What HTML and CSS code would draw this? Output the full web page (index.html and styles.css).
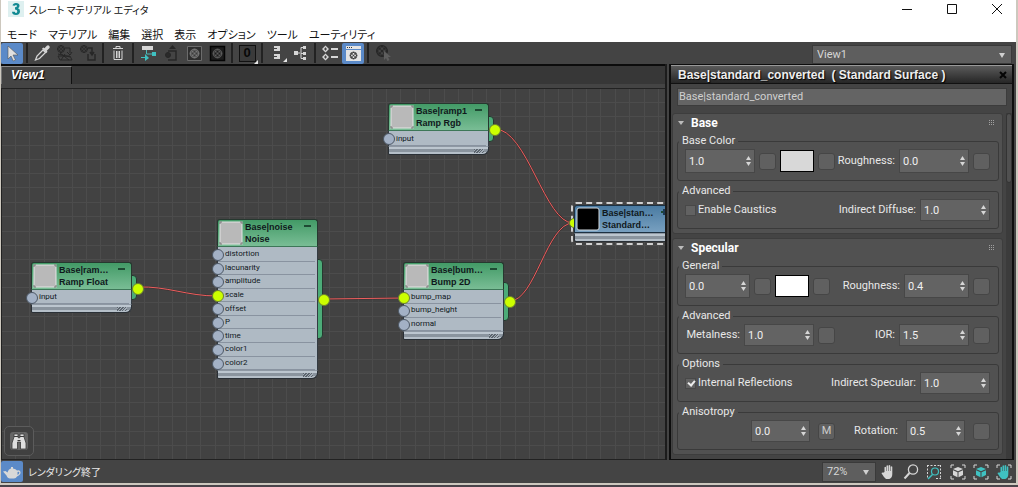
FILE: index.html
```html
<!DOCTYPE html>
<html lang="ja">
<head>
<meta charset="utf-8">
<title>スレート マテリアル エディタ</title>
<link rel="stylesheet" href="styles.css">
</head>
<body>
<svg class="defs" width="0" height="0" aria-hidden="true">
  <defs>
    <symbol id="spin" viewBox="0 0 5 10"><path d="M0 4L2.5 0L5 4zM0 6L2.5 10L5 6z" fill="#d6d6d6"/></symbol>
    <symbol id="ball" viewBox="0 0 10 10"><circle cx="5" cy="5" r="4.400" fill="none" stroke="currentColor"/><path d="M4 0h2v2H4zM2 2h2v2H2zM6 2h2v2H6zM0 4h2v2H0zM4 4h2v2H4zM8 4h2v2H8zM2 6h2v2H2zM6 6h2v2H6zM4 8h2v2H4z" fill="currentColor"/></symbol>
    <symbol id="thumb" viewBox="0 0 24 24"><rect x="1" y="1" width="22" height="22" fill="#b9b9b9" stroke="#e4e4e4"/><path d="M1 3V1h2M21 1h2v2M23 21v2h-2M3 23H1v-2" fill="none" stroke="#777"/></symbol>
    <symbol id="grip" viewBox="0 0 6 6"><path d="M0 0h1v1H0zM2 0h1v1H2zM4 0h1v1H4zM0 2h1v1H0zM2 2h1v1H2zM4 2h1v1H4zM0 4h1v1H0zM2 4h1v1H2zM4 4h1v1H4z" fill="#a0a0a0"/></symbol>
    <symbol id="cube" viewBox="0 0 16 16"><path d="M1 4V1h3M12 1h3v3M15 12v3h-3M4 15H1v-3" fill="none" stroke="#d6d6d6"/><path d="M8 3l5 2-5 2.300L3 5zM3 6.200l4.500 2v5L3 11zM13 6.200l-4.500 2v5L13 11z" fill="currentColor"/></symbol>
    <symbol id="hand" viewBox="0 0 16 16"><path d="M4.500 8V3.200q.8-1 1.500 0V7h.5V1.700q.8-1 1.600 0V7h.5V1.500q.8-1 1.600 0V7h.5V2.800q.8-1 1.600 0V10q0 4-3 5H6Q4 13.500 1.500 9.200q.6-1.200 1.600-.4z" fill="currentColor"/></symbol>
  </defs>
</svg>
<div class="window">
  <header class="caption">
    <div class="titlebar">
      <svg class="app-icon" viewBox="0 0 16 16" aria-hidden="true"><rect width="16" height="16" fill="#def0f0"/><path d="M4.500 4.500Q5 2 8 2q3.500 0 3.500 2.800Q11.500 6.500 10 7.300q2 .7 2 3Q12 14 8 14q-3.800 0-4-3.200h2.800q.2 1.200 1.300 1.200 1.200 0 1.200-1.700Q9.300 8.500 7 8.500V6.300q1.900 0 1.900-1.200Q8.900 4 8 4q-.8 0-1 .8z" fill="#128a93"/></svg>
      <h1>スレート マテリアル エディタ</h1>
      <div class="window-buttons">
        <button aria-label="最小化"><svg viewBox="0 0 10 10"><path d="M0 5.500h10"/></svg></button>
        <button aria-label="最大化"><svg viewBox="0 0 10 10"><path d="M.5.500h9v9h-9z"/></svg></button>
        <button aria-label="閉じる"><svg viewBox="0 0 10 10"><path d="M0 0l10 10M10 0L0 10"/></svg></button>
      </div>
    </div>
    <nav class="menu">
      <button>モード</button><button>マテリアル</button><button>編集</button><button>選択</button><button>表示</button><button>オプション</button><button>ツール</button><button>ユーティリティ</button>
    </nav>
  </header>

  <div class="toolbar">
    <button class="tool on" aria-label="選択ツール"><svg viewBox="0 0 20 20"><path d="M6 3l10 9h-5l2.500 5-2.200 1-2.300-5L6 16z" fill="#e0e0e0" stroke="#555" stroke-width=".6"/></svg></button>
    <i class="sep"></i>
    <button class="tool" aria-label="スポイト"><svg viewBox="0 0 20 20"><path d="M3.500 17l1.500-4 6-6 2.500 2.500-6 6z" fill="none" stroke="#d6d6d6" stroke-width="1.300"/><path d="M10 5.500l1.500-1 1 .8 2.300-2.600q1.500-1 2.500.3t0 2.300l-2.500 2.500.7 1-1 1.200z" fill="#d6d6d6"/></svg></button>
    <button class="tool off" aria-label="シーンに適用"><svg viewBox="0 0 20 20"><use href="#ball" x="2" y="2" width="8" height="8"/><path d="M10 5h5v5m-3-1l3 3 2-3M3 13h12l2 4H5zM5 10l9 7M10 11l-4 6M3 11l12 3" fill="none" stroke="currentColor"/></svg></button>
    <button class="tool off" aria-label="マテリアルを割り当て"><svg viewBox="0 0 20 20"><use href="#ball" x="2" y="2" width="8" height="8"/><path d="M10 5h4v6m-2-2l2 3 2-3" fill="none" stroke="currentColor" stroke-width="1.500"/><path d="M10 11v6h7v-6" fill="none" stroke="currentColor" stroke-width="1.500"/></svg></button>
    <i class="sep"></i>
    <button class="tool" aria-label="削除"><svg viewBox="0 0 20 20"><path d="M5 5.500h10M8 5V3.500h4V5M6 7.500v9h8v-9M8.500 8v7M10 8v7M11.500 8v7" fill="none" stroke="#d6d6d6"/></svg></button>
    <i class="sep"></i>
    <button class="tool" aria-label="子を移動"><svg viewBox="0 0 20 20"><path d="M4 3h11v4H4z" fill="#d6d6d6"/><path d="M8.500 7v4H14" fill="none" stroke="#4ab8b8"/><path d="M14 9h4v4h-4zM3 14h4v-3l4 4-4 3v-3H3z" fill="#3fc1c1"/></svg></button>
    <button class="tool off" aria-label="未使用を隠す"><svg viewBox="0 0 20 20"><path d="M7 8h8v9H7" fill="none" stroke="currentColor" stroke-width="1.500"/><path d="M8 6l3.500-4L15 6z" fill="currentColor"/><circle cx="7" cy="12" r="2.500" fill="#2a2a2a" stroke="currentColor"/></svg></button>
    <button class="tool" aria-label="ビューポートに表示"><svg viewBox="0 0 20 20"><path d="M3.500 3.500h14v14h-14z" fill="#2e2e2e" stroke="#6c6c6c"/><circle cx="10.500" cy="10.500" r="5" fill="#3c3c3c"/><g color="#777"><use href="#ball" x="5.500" y="5.500" width="10" height="10"/></g></svg></button>
    <button class="tool" aria-label="背景を表示"><svg viewBox="0 0 20 20"><path d="M3.500 3.500h14v14h-14z" fill="#1c1c1c" stroke="#050505" stroke-width="1.500"/><g color="#5c5c5c"><use href="#ball" x="5.500" y="5.500" width="10" height="10"/></g></svg></button>
    <i class="sep"></i>
    <button class="tool channel" aria-label="マテリアル ID チャネル"><span>0</span></button>
    <i class="sep"></i>
    <button class="tool" aria-label="すべてレイアウト"><svg viewBox="0 0 20 20"><path d="M7 3h6v5H7zM7 11h6v5H7z" fill="#d6d6d6"/><path d="M7 5.500h3M7 13.500h3" stroke="#444"/><path d="M20 15v4h-4z" fill="#e8e8e8"/></svg></button>
    <button class="tool" aria-label="子をレイアウト"><svg viewBox="0 0 20 20"><path d="M4 8h4v4H4zM13 3h3v3h-3zM13 9h3v3h-3zM13 14h3v3h-3z" fill="#d6d6d6"/><path d="M8 10h2M13 4.500h-2v11h2M11 10.500h2" fill="none" stroke="#d6d6d6"/></svg></button>
    <i class="sep"></i>
    <button class="tool" aria-label="ブラウザ"><svg viewBox="0 0 20 20"><path d="M5.500 2.500L9 6 5.500 9.500 2 6zM5.500 10.500L9 14l-3.500 3.500L2 14z" fill="#d6d6d6"/><path d="M4 6h3M5.500 4.500v3M4 14h3M5.500 12.500v3" stroke="#444"/><path d="M11 6h7M11 14h7" stroke="#d6d6d6" stroke-width="2"/></svg></button>
    <button class="tool on" aria-label="パラメータ エディタ"><svg viewBox="0 0 20 20"><path d="M3 3h15v3H3zM3 7h15v11H3z" fill="#e4e4e4"/><path d="M4 4.500h1M6 4.500h1M8 4.500h1" stroke="#333"/><g color="#3a3a3a"><use href="#ball" x="6.500" y="8.500" width="8" height="8"/></g></svg></button>
    <i class="sep"></i>
    <button class="tool off" aria-label="マテリアルから選択"><svg viewBox="0 0 20 20"><use href="#ball" x="3" y="2" width="12" height="12"/><path d="M11 8l7 6h-3l1.500 3-2 1-1.500-3-2 2z" fill="#5e5e5e"/></svg></button>
    <div class="pick view-pick"><select aria-label="ビュー"><option>View1</option></select></div>
  </div>

  <main class="work">
    <section class="view">
      <div class="tabs"><button class="tab">View1</button></div>
      <div class="canvas">
        <svg class="wires" aria-hidden="true">
          <defs><pattern id="grid" x="-1" y="-1" width="100" height="100" patternUnits="userSpaceOnUse"><path d="M14.500 0v100M28.500 0v100M43.500 0v100M57.500 0v100M71.500 0v100M85.500 0v100M99.500 0v100M0 14.500h100M0 28.500h100M0 43.500h100M0 57.500h100M0 71.500h100M0 85.500h100M0 99.500h100" stroke="#4c4c4c"/></pattern></defs>
          <rect width="100%" height="100%" fill="url(#grid)"/>
          <path class="wire-shade" d="M136 198C165 197 185 207 215 207M322 210L401 209M493 40C525 40 543 134 571 134M508 212C533 212 545 134 571 134"/>
          <path class="wire" d="M136 198C165 197 185 207 215 207M322 210L401 209M493 40C525 40 543 134 571 134M508 212C533 212 545 134 571 134"/>
        </svg>

        <article class="node ramp-rgb">
          <i class="out"></i>
          <header><svg viewBox="0 0 24 24"><use href="#thumb"/></svg><h2>Base|ramp1<br>Ramp Rgb</h2><b class="fold"></b></header>
          <ul><li>input</li></ul><footer></footer>
        </article>
        <article class="node noise">
          <i class="out"></i>
          <header><svg viewBox="0 0 24 24"><use href="#thumb"/></svg><h2>Base|noise<br>Noise</h2><b class="fold"></b></header>
          <ul><li>distortion</li><li>lacunarity</li><li>amplitude</li><li class="linked">scale</li><li>offset</li><li>P</li><li>time</li><li>color1</li><li>color2</li></ul><footer></footer>
        </article>
        <article class="node ramp-float">
          <i class="out"></i>
          <header><svg viewBox="0 0 24 24"><use href="#thumb"/></svg><h2>Base|ram…<br>Ramp Float</h2><b class="fold"></b></header>
          <ul><li>input</li></ul><footer></footer>
        </article>
        <article class="node bump">
          <i class="out"></i>
          <header><svg viewBox="0 0 24 24"><use href="#thumb"/></svg><h2>Base|bum…<br>Bump 2D</h2><b class="fold"></b></header>
          <ul><li class="linked">bump_map</li><li>bump_height</li><li>normal</li></ul><footer></footer>
        </article>
        <article class="node standard">
          <i class="in"></i>
          <header><svg viewBox="0 0 24 24"><rect x="1" y="1" width="22" height="22" rx="2" stroke="#d0d8de"/></svg><h2>Base|stan…<br>Standard…</h2><b class="fold plus"></b></header>
          <footer></footer>
        </article>

        <button class="find" aria-label="検索"><svg viewBox="0 0 20 20"><rect x="1" y="1" width="18" height="18" rx="3" fill="#666"/><path d="M5 3h4v3l.5 1h1l.5-1V3h4v3l2 6v6h-5.500v-7h-3v7H3v-6l2-6z" fill="#e0e0e0" stroke="#3a3a3a" stroke-width=".8"/><path d="M5 5.500h4M11 5.500h4M8.500 9.500h3" stroke="#3a3a3a"/></svg></button>
      </div>
    </section>

    <aside class="params">
      <header class="params-head"><h2>Base|standard_converted&nbsp; ( Standard Surface )</h2><button aria-label="閉じる"><svg viewBox="0 0 8 8"><path d="M1 1l6 6M7 1L1 7" stroke="#050505" stroke-width="2"/></svg></button></header>
      <input class="name" aria-label="名前" value="Base|standard_converted">
      <div class="rollouts">
        <div class="list">
          <section class="rollout">
            <h3><button><i class="tri"></i>Base</button><svg viewBox="0 0 6 6"><use href="#grip"/></svg></h3>
            <fieldset class="tall"><legend>Base Color</legend>
              <div class="left"><span class="spin"><input aria-label="Base Color" value="1.0"><svg><use href="#spin"/></svg></span><button class="map" aria-label="マップ"></button><button class="swatch grey" aria-label="カラー"></button><button class="map" aria-label="マップ"></button></div>
              <div class="right"><label for="br">Roughness:</label><span class="spin"><input id="br" value="0.0"><svg><use href="#spin"/></svg></span><button class="map" aria-label="マップ"></button></div>
            </fieldset>
            <fieldset><legend>Advanced</legend>
              <label class="check"><input type="checkbox">Enable Caustics</label>
              <div class="right"><label for="bd">Indirect Diffuse:</label><span class="spin"><input id="bd" value="1.0"><svg><use href="#spin"/></svg></span></div>
            </fieldset>
          </section>
          <section class="rollout">
            <h3><button><i class="tri"></i>Specular</button><svg viewBox="0 0 6 6"><use href="#grip"/></svg></h3>
            <fieldset class="tall"><legend>General</legend>
              <div class="left"><span class="spin medium"><input aria-label="Specular" value="0.0"><svg><use href="#spin"/></svg></span><button class="map" aria-label="マップ"></button><button class="swatch" aria-label="カラー"></button><button class="map" aria-label="マップ"></button></div>
              <div class="right"><label for="sr">Roughness:</label><span class="spin medium"><input id="sr" value="0.4"><svg><use href="#spin"/></svg></span><button class="map" aria-label="マップ"></button></div>
            </fieldset>
            <fieldset><legend>Advanced</legend>
              <div class="left end"><label for="sm">Metalness:</label><span class="spin"><input id="sm" value="1.0"><svg><use href="#spin"/></svg></span><button class="map" aria-label="マップ"></button></div>
              <div class="right"><label for="si">IOR:</label><span class="spin"><input id="si" value="1.5"><svg><use href="#spin"/></svg></span><button class="map" aria-label="マップ"></button></div>
            </fieldset>
            <fieldset><legend>Options</legend>
              <label class="check"><input type="checkbox" checked>Internal Reflections</label>
              <div class="right"><label for="ss">Indirect Specular:</label><span class="spin"><input id="ss" value="1.0"><svg><use href="#spin"/></svg></span></div>
            </fieldset>
            <fieldset class="wide"><legend>Anisotropy</legend>
              <div class="left end"><span class="spin small"><input aria-label="Anisotropy" value="0.0"><svg><use href="#spin"/></svg></span><button class="map">M</button></div>
              <div class="right"><label for="sa">Rotation:</label><span class="spin small"><input id="sa" value="0.5"><svg><use href="#spin"/></svg></span><button class="map" aria-label="マップ"></button></div>
            </fieldset>
          </section>
          <section class="rollout"></section>
        </div>
        <div class="scroll"><i></i></div>
      </div>
    </aside>
  </main>

  <footer class="status">
    <button class="tool on" aria-label="レンダリング"><svg viewBox="0 0 20 20"><path d="M9 5h2v1.500q3 .3 4 2 3-1 3.500 1.500T15 14.500q-1 2-3 2H8q-2.500 0-3.500-3L1 9.500 3.500 9l2 1.500Q6.500 7 9 6.500z" fill="#d8d8d8"/><path d="M15.500 10q2-.8 1.800.7T15.500 13z" fill="#5b8ac8"/></svg></button>
    <p>レンダリング終了</p>
    <div class="pick zoom-pick"><select aria-label="ズーム"><option>72%</option></select></div>
    <button class="tool" aria-label="パン"><svg viewBox="0 0 20 20"><g color="#d6d6d6"><use href="#hand" x="2" y="2" width="16" height="16"/></g></svg></button>
    <button class="tool" aria-label="ズーム"><svg viewBox="0 0 20 20"><circle cx="12" cy="7.500" r="4.600" fill="none" stroke="#d6d6d6" stroke-width="1.300"/><path d="M8.500 11L3.500 16.500" stroke="#d6d6d6" stroke-width="2"/></svg></button>
    <button class="tool" aria-label="領域ズーム"><svg viewBox="0 0 20 20"><path d="M3.500 3v14M3 3.500h14M16.500 3v14M12 16.500h5" fill="none" stroke="#d6d6d6" stroke-dasharray="2 1.500"/><circle cx="11" cy="9.500" r="3.500" fill="#444" stroke="#3fc1c1" stroke-width="1.200"/><path d="M8.500 12.500L4 17" stroke="#3fc1c1" stroke-width="1.500"/></svg></button>
    <button class="tool" aria-label="全体表示"><svg viewBox="0 0 20 20"><g color="#d6d6d6"><use href="#cube" x="3" y="2" width="16" height="16"/></g></svg></button>
    <button class="tool" aria-label="選択を全体表示"><svg viewBox="0 0 20 20"><g color="#3fc1c1"><use href="#cube" x="3" y="2" width="16" height="16"/></g></svg></button>
    <button class="tool" aria-label="選択にパン"><svg viewBox="0 0 20 20"><path d="M4 6V3h3M15 3h3v3M18 14v3h-3M7 17H4v-3" fill="none" stroke="#d6d6d6"/><g color="#3fc1c1"><use href="#hand" x="3" y="2" width="16" height="16"/></g></svg></button>
  </footer>
</div>
</body>
</html>
```
FILE: styles.css
```css
* { box-sizing: border-box; }
body {
  margin: 0;
  background: #4a444a;
  color: #e8e8e8;
  font: 11px/14px Roboto, "Noto Sans", "Noto Sans CJK JP", sans-serif;
}
button, input, select { font: inherit; color: inherit; margin: 0; }
button { border: 0; padding: 0; background: none; }
h1, h2, h3, p, ul { margin: 0; padding: 0; font-size: inherit; font-weight: normal; list-style: none; }
i { display: block; }
svg { display: block; flex: none; }
.defs { position: absolute; }

.window {
  display: flex;
  flex-direction: column;
  height: calc(100vh - 2px);
  border: solid #cdc8be;
  border-width: 0 2px 2px 1px;
  background: #444;
}

/* caption and menus */
.caption {
  display: flex;
  flex-direction: column;
  gap: 9px;
  background: #fff;
  color: #111;
  font: 11px/15px "Noto Sans CJK JP", sans-serif;
  font-feature-settings: "palt";
}
.titlebar { display: flex; align-items: center; height: 18px; padding-left: 7px; }
.app-icon { width: 16px; height: 16px; }
.titlebar h1 { padding-left: 5px; font-size: 10px; }
.window-buttons { display: flex; gap: 9px; margin-left: auto; padding-right: 1px; }
.window-buttons button { display: grid; place-items: center; width: 36px; height: 18px; }
.window-buttons svg { width: 10px; height: 10px; fill: none; stroke: #111; }
.menu { display: flex; gap: 11px; padding-left: 6px; height: 15px; }

/* tool bar */
.toolbar { display: flex; align-items: center; gap: 1px; height: 22px; }
.tool { display: grid; place-items: center; width: 22px; height: 21px; border-radius: 2px; }
.tool svg { width: 20px; height: 20px; }
.tool.on { background: #5b8ac8; }
.off { color: #272727; }
.sep { width: 2px; height: 20px; margin: 0 2px; background: #222; }
.channel { position: relative; font: bold 13px/14px "Liberation Sans", sans-serif; color: #080808; }
.channel span { width: 17px; height: 17px; border: 1px solid #111; background: #3a3a3a; }
.channel::after { content: ""; position: absolute; right: 0; bottom: 0; border: 2px solid; border-color: transparent #e8e8e8 #e8e8e8 transparent; }
.pick { position: relative; }
.pick select {
  appearance: none;
  display: block;
  width: 100%;
  height: 100%;
  padding: 0 4px;
  border: 1px solid #3a3a3a;
  border-radius: 0;
  background: #5e5e5e;
  color: #d6d6d6;
}
.pick::after { content: ""; position: absolute; right: 7px; top: 8px; border: 3px solid transparent; border-top: 5px solid #d0d0d0; border-bottom: 0; }
.view-pick { width: 200px; height: 19px; margin: 3px 4px 0 auto; }

/* work area */
.work { flex: 1; min-height: 0; display: grid; grid-template-columns: minmax(0, 1fr) 345px; gap: 2px; padding-right: 2px; }
.view { display: flex; flex-direction: column; min-height: 0; border-right: 2px solid #1c1c1c; }
.tabs { display: flex; height: 20px; margin-bottom: 4px; border-top: 2px solid #0c0c0c; background: #373737; }
.tab {
  width: 71px;
  padding: 0 0 0 9px;
  text-align: left;
  border: solid;
  border-width: 1px 1px 0 1px;
  border-color: #8c8c8c #111 #111 #777;
  background: #444;
  color: #fff;
  font: italic bold 12px/17px "Liberation Sans", sans-serif;
  text-shadow: 1px 1px 1px #000;
}
.canvas { position: relative; flex: 1; overflow: hidden; border: solid #222; border-width: 1px 0 1px 1px; background: #424242; }
.wires { width: 100%; height: 100%; fill: none; }
.wire { stroke: #ee5f5f; }
.wire-shade { stroke: #3a2424; stroke-width: 2; opacity: .6; }

/* nodes are free objects on the canvas */
.node { position: absolute; display: flex; flex-direction: column; width: 101px; color: #10181c; font: 8px/10px Roboto, sans-serif; }
.ramp-rgb { left: 386px; top: 14px; height: 52px; }
.noise { left: 215px; top: 130px; height: 160px; }
.ramp-float { left: 29px; top: 173px; height: 51px; }
.bump { left: 401px; top: 173px; height: 78px; }
.standard { left: 572px; top: 116px; height: 37px; }
.node header {
  position: relative;
  display: flex;
  gap: 2px;
  height: 28px;
  padding: 1px;
  border: 1px solid #26382f;
  border-bottom-color: #3d7758;
  border-radius: 3px 3px 0 0;
  background: linear-gradient(#429a66, #79bd95);
}
.node header svg { width: 24px; height: 24px; }
.node h2 { font: bold 9px/12px "Liberation Sans", sans-serif; white-space: nowrap; }
.fold { position: absolute; right: 6px; top: 5px; width: 7px; height: 2px; background: #1e4a33; }
.plus::after { content: ""; position: absolute; left: 2px; top: -2px; width: 3px; height: 6px; background: #1e3a52; }
.node ul { position: relative; flex: 1; display: flex; flex-direction: column; padding-top: 1px; border: solid #333b42; border-width: 0 1px; background: #afbac4; }
.node li { position: relative; flex: 1; display: flex; align-items: center; padding-left: 7px; border-bottom: 1px solid #8993a0; margin-right: 2px; }
.node li::before, .out::after, .in {
  content: "";
  position: absolute;
  width: 10px;
  height: 10px;
  border: 1px solid #4d5866;
  border-radius: 50%;
  background: #a3b1c5;
}
.node li::before { left: -6px; top: 1px; }
.node li.linked::before, .out::after, .in { background: #cf0; border-color: #6a8030; }
.out { position: absolute; left: 97px; top: 25%; width: 9px; height: 50%; border: 1px solid #26382f; border-radius: 0 4px 4px 0; background: #4cab78; }
.out::after { left: 3px; top: calc(50% - 5px); }
.node footer {
  position: relative;
  height: 9px;
  border: 1px solid #2a3036;
  border-top-color: #8e98a3;
  border-radius: 0 0 6px 2px;
  background: linear-gradient(#bcc6cf 2px, #8a949e 2px, #8a949e 5px, #b5bfc8 5px);
}
.ramp-rgb footer::after, .noise footer::after, .ramp-float footer::after, .bump footer::after {
  content: "";
  position: absolute;
  right: 4px;
  top: 2px;
  width: 10px;
  height: 4px;
  background: repeating-linear-gradient(135deg, #5c656e 0 1px, #a3adb7 1px 2px);
}
.standard { outline: 2px dashed #cfcfcf; outline-offset: 1px; border-radius: 2px; }
.standard header { background: linear-gradient(#4a7ba2, #78a0c0); border-color: #1d3142; }
.in { left: -5px; top: 13px; }
.find { position: absolute; left: 2px; bottom: 3px; display: grid; place-items: center; width: 30px; height: 30px; border: 1px solid #5c5c5c; border-radius: 5px; background: #404040; }
.find svg { width: 20px; height: 20px; }

/* parameter editor */
.params { display: flex; flex-direction: column; min-height: 0; border: solid #0e0e0e; border-width: 1px 2px; }
.params-head {
  display: flex;
  align-items: center;
  height: 19px;
  padding: 0 5px 0 7px;
  border-top: 1px solid #999;
  border-bottom: 1px solid #111;
  background: linear-gradient(#5a5a5a, #262626);
}
.params-head h2 { font: bold 12px/16px "Liberation Sans", sans-serif; color: #eee; text-shadow: 1px 1px 1px #000; white-space: nowrap; }
.params-head button { margin-left: auto; }
.params-head svg { width: 8px; height: 8px; }
.name { height: 18px; margin: 4px 5px 7px 6px; padding: 0 1px 1px; border: 1px solid #3c3c3c; background: #646464; color: #d0d0d0; }
.rollouts { flex: 1; min-height: 0; display: flex; gap: 3px; padding-left: 1px; overflow: hidden; }
.list { flex: 1; min-width: 0; display: flex; flex-direction: column; gap: 4px; }
.rollout { flex: none; min-height: 20px; padding: 0 3px 4px 4px; border: 1px solid #3d3d3d; border-radius: 3px; background: #515151; }
.rollout h3 { display: flex; align-items: center; height: 19px; padding: 0 4px 2px 1px; }
.rollout h3 button { display: flex; align-items: center; gap: 7px; font-size: 12px; font-weight: bold; color: #fff; }
.rollout h3 svg { width: 6px; height: 6px; margin-left: auto; }
.tri { border: 3px solid transparent; border-top: 4px solid #bbb; border-bottom: 0; }
fieldset {
  display: flex;
  align-items: center;
  justify-content: space-between;
  min-width: 0;
  margin: 0 0 2px;
  padding: 0 8px 7px 7px;
  border: 1px solid #3a3a3a;
  border-radius: 3px;
}
fieldset:last-child { margin-bottom: 0; }
legend { height: 16px; padding: 0 3px; margin-left: -6px; line-height: 16px; }
.left, .right { display: flex; align-items: center; gap: 4px; }
.left { width: 150px; }
.end { justify-content: flex-end; }
.spin { position: relative; flex: none; width: 70px; height: 22px; }
.tall .spin { height: 24px; }
.spin.medium { width: 65px; }
.spin.small { width: 59px; }
.spin input { display: block; width: 100%; height: 100%; padding: 0 14px 0 3px; border: 1px solid #474747; background: #636363; color: #f0f0f0; }
.spin svg { position: absolute; right: 4px; top: calc(50% - 5px); width: 5px; height: 10px; }
.map { flex: none; width: 17px; height: 17px; border: 1px solid #464646; border-radius: 3px; background: #606060; color: #ccc; }
.swatch { flex: none; width: 34px; height: 22px; border: 1px solid #000; background: #fff; }
.grey { background: #d8d8d8; }
.wide .left, .wide .right { gap: 8px; }
.check { display: flex; align-items: center; gap: 2px; }
.check input { appearance: none; width: 11px; height: 11px; border: 1px solid #484848; background: #626262; }
.check input:checked::after { content: ""; display: block; width: 3px; height: 5px; margin: 0 0 0 3px; border: solid #eee; border-width: 0 2px 2px 0; transform: rotate(40deg); }
.scroll { flex: none; width: 6px; background: #3b3b3b; }
.scroll i { height: 70px; border: 1px solid #333; border-radius: 3px; background: #505050; }

/* status bar */
.status { display: flex; align-items: center; gap: 1px; height: 23px; padding-right: 2px; }
.status p { padding-left: 4px; font: 10px/14px "Noto Sans CJK JP", sans-serif; font-feature-settings: "palt"; }
.zoom-pick { width: 54px; height: 20px; margin-left: auto; }
```
